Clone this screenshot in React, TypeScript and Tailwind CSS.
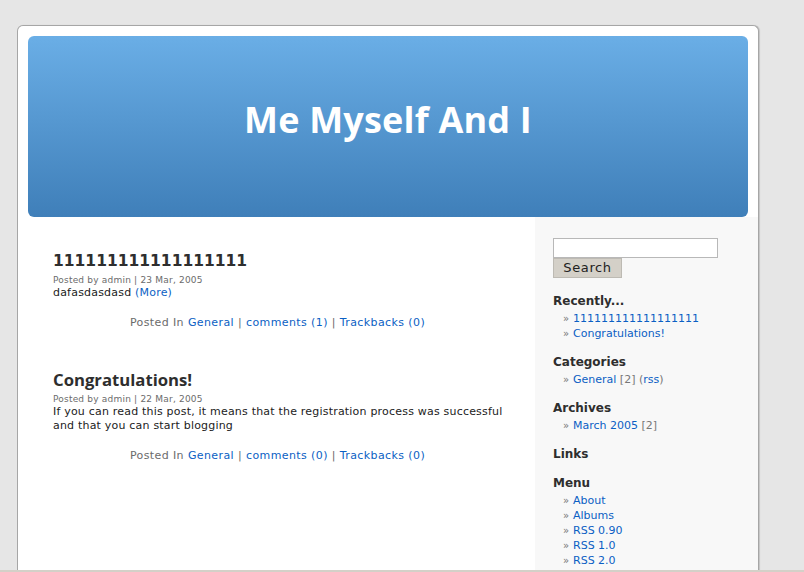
const links = 'text-[#0b5fc4]';

function Post({
  title,
  titleFont,
  date,
  body,
  more,
  comments,
}: {
  title: string;
  titleFont: string;
  date: string;
  body: React.ReactNode;
  more?: boolean;
  comments: number;
}) {
  return (
    <div className="mb-[40px]">
      <h2 className={`${titleFont} leading-[20px] font-bold text-[#2e2e2e]`}>{title}</h2>
      <div className="mt-[4px] text-[9px] leading-[11px] tracking-[0.2px] text-[#6b6b6b]">
        Posted by admin | {date}
      </div>
      <div className="text-[11px] leading-[14px] tracking-[0.2px] text-[#222]">
        {body}
        {more && <span className={links}> (More)</span>}
      </div>
      <div className="mt-[16px] pr-[13px] text-center text-[11px] leading-[14px] tracking-[0.4px] text-[#6b6b6b]">
        Posted In <span className={links}>General</span> |{' '}
        <span className={links}>comments ({comments})</span> |{' '}
        <span className={links}>Trackbacks (0)</span>
      </div>
    </div>
  );
}

function Item({ children }: { children: React.ReactNode }) {
  return (
    <li className="flex h-[15px] items-center pl-[10px] text-[11px] leading-[15px]">
      <span className="w-[10px] text-[10px] text-[#777]">»</span>
      <span>{children}</span>
    </li>
  );
}

function Heading({ children }: { children: React.ReactNode }) {
  return <h3 className="text-[12px] leading-[16px] font-bold text-[#2e2e2e]">{children}</h3>;
}

export default function App() {
  return (
    <div className="min-h-screen overflow-hidden bg-[#e6e6e6] pt-[25px] pl-[17px] font-['DejaVu_Sans',Verdana,sans-serif]">
      <div className="w-[742px] rounded-t-[6px] border border-b-0 border-[#a6a6a6] bg-white shadow-[1px_0_1px_rgba(0,0,0,0.15)]">
        <div className="mx-[10px] mt-[10px] flex h-[181px] items-center justify-center rounded-[6px] bg-gradient-to-b from-[#6aaee6] to-[#3f7fb9] pb-[14px]">
          <h1 className="font-['Open_Sans',sans-serif] text-[36px] font-bold tracking-[0.2px] text-white">
            Me Myself And I
          </h1>
        </div>
        <div className="flex">
          <div className="w-[517px] pt-[34px] pl-[35px] pr-[20px]">
            <Post
              title="111111111111111111"
              titleFont="font-['DejaVu_Sans',sans-serif] text-[15.5px]"
              date="23 Mar, 2005"
              body="dafasdasdasd"
              more
              comments={1}
            />
            <Post
              title="Congratulations!"
              titleFont="font-['Open_Sans',sans-serif] text-[16.7px]"
              date="22 Mar, 2005"
              body="If you can read this post, it means that the registration process was successful and that you can start blogging"
              comments={0}
            />
          </div>
          <div className="h-[360px] w-[223px] bg-[#f8f8f8] pt-[21px] pl-[18px]">
            <input className="block h-[20px] w-[165px] border border-[#b8b8b8] bg-white" />
            <button className="block h-[20px] w-[69px] border border-[#bdbab3] bg-[#d4d0c8] text-[13px] leading-[16px] tracking-[0.6px] text-[#222]">
              Search
            </button>
            <div className="mt-[15px]">
              <Heading>Recently...</Heading>
              <ul className="mt-[2px]">
                <Item><span className={links}>111111111111111111</span></Item>
                <Item><span className={links}>Congratulations!</span></Item>
              </ul>
            </div>
            <div className="mt-[13px]">
              <Heading>Categories</Heading>
              <ul className="mt-[2px]">
                <Item>
                  <span className={links}>General</span>{' '}
                  <span className="text-[#777]">[2] (</span>
                  <span className={links}>rss</span>
                  <span className="text-[#777]">)</span>
                </Item>
              </ul>
            </div>
            <div className="mt-[13px]">
              <Heading>Archives</Heading>
              <ul className="mt-[2px]">
                <Item>
                  <span className={links}>March 2005</span> <span className="text-[#777]">[2]</span>
                </Item>
              </ul>
            </div>
            <div className="mt-[13px]">
              <Heading>Links</Heading>
            </div>
            <div className="mt-[13px]">
              <Heading>Menu</Heading>
              <ul className="mt-[2px]">
                <Item><span className={links}>About</span></Item>
                <Item><span className={links}>Albums</span></Item>
                <Item><span className={links}>RSS 0.90</span></Item>
                <Item><span className={links}>RSS 1.0</span></Item>
                <Item><span className={links}>RSS 2.0</span></Item>
              </ul>
            </div>
          </div>
        </div>
      </div>
      <div className="fixed bottom-0 left-0 h-[2px] w-full bg-[#d4d0c8]" />
    </div>
  );
}
